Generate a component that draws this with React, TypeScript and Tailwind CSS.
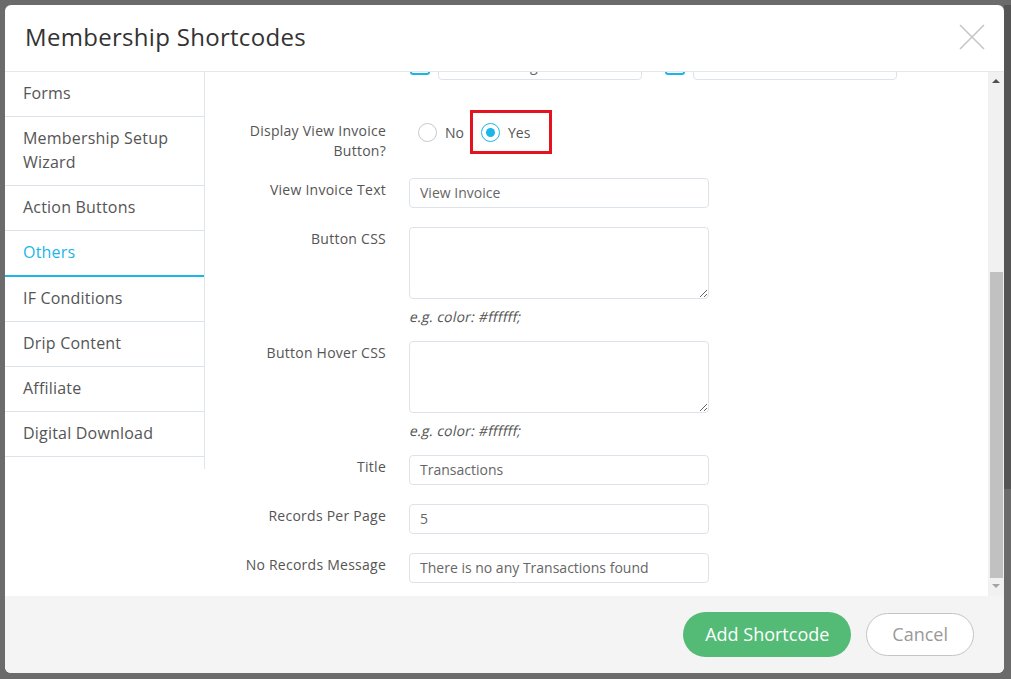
const menu = [
  "Forms",
  "Membership Setup Wizard",
  "Action Buttons",
  "Others",
  "IF Conditions",
  "Drip Content",
  "Affiliate",
  "Digital Download",
];

function Label({ children }: { children: React.ReactNode }) {
  return (
    <div className="w-[181px] shrink-0 pt-[2px] text-right text-[14px] leading-5 tracking-[0.25px] text-[#555]">
      {children}
    </div>
  );
}

function TextInput({ value }: { value: string }) {
  return (
    <div className="flex h-[30px] w-[300px] items-center rounded-[4px] border border-[#dde3ea] bg-white pb-[2px] pl-[10px] text-[14px] text-[#666]">
      {value}
    </div>
  );
}

function CssArea() {
  return (
    <div className="flex flex-col">
      <textarea className="h-[72px] w-[300px] rounded-[4px] border border-[#dde3ea] bg-white outline-none" />
      <p className="mt-2 text-[14px] leading-5 tracking-[0.2px] text-[#555]">
        <span className="inline-block -skew-x-12 pl-[1px]">e.g. color: #ffffff;</span>
      </p>
    </div>
  );
}

function Radio({ checked }: { checked?: boolean }) {
  return (
    <span
      className={
        checked
          ? "flex h-[19px] w-[19px] items-center justify-center rounded-full border border-[#1ab6e8] bg-white"
          : "flex h-[19px] w-[19px] items-center justify-center rounded-full border border-[#c9c9c9] bg-white"
      }
    >
      {checked && <span className="h-[9px] w-[9px] rounded-full bg-[#1ab6e8]" />}
    </span>
  );
}

export default function App() {
  return (
    <div
      className="flex h-[679px] w-[1011px] bg-[#6b6b6b] pl-[5px] pt-[5px]"
      style={{ fontFamily: '"Open Sans", "Noto Sans", sans-serif' }}
    >
      <div className="flex h-[668px] w-[999px] flex-col overflow-hidden rounded-[6px] bg-white">
        {/* header */}
        <div className="flex h-[67px] shrink-0 items-center justify-between border-b border-[#e5e7eb] pb-[2px] pl-[20px] pr-[19px]">
          <h1 className="text-[24px] leading-8 tracking-[0.3px] text-[#333]">Membership Shortcodes</h1>
          <svg width="26" height="26" viewBox="0 0 26 26" fill="none" stroke="#c6c6c6" strokeWidth="1.6">
            <path d="M1 1 L25 25 M25 1 L1 25" />
          </svg>
        </div>

        {/* body */}
        <div className="flex h-[524px] shrink-0">
          <div className="self-start w-[200px] shrink-0 border-r border-[#e1e5eb] pb-3">
            {menu.map((item) =>
              item === "Others" ? (
                <div
                  key={item}
                  className="border-b-2 border-[#1ab6e8] pb-[11px] pl-[18px] pt-[9px] text-[16px] leading-6 tracking-[0.2px] text-[#1ab6e8]"
                >
                  {item}
                </div>
              ) : (
                <div
                  key={item}
                  className="border-b border-[#dde3eb] pb-[11px] pl-[18px] pr-4 pt-[9px] text-[16px] leading-6 tracking-[0.2px] text-[#555]"
                >
                  {item}
                </div>
              )
            )}
          </div>

          <div className="flex-1 overflow-hidden">
            <div className="-mt-[22px] flex flex-col">
              {/* partially scrolled row */}
              <div className="flex h-[30px] items-end pl-[205px]">
                <span className="mb-[5px] h-[20px] w-[20px] rounded-[3px] border-2 border-[#1ab6e8]" />
                <div className="ml-[8px] flex h-[30px] w-[204px] items-center rounded-[4px] border border-[#dde3ea] pl-[10px] text-[14px] text-[#666]">
                  Date Heading
                </div>
                <span className="mb-[5px] ml-[23px] h-[20px] w-[20px] rounded-[3px] border-2 border-[#1ab6e8]" />
                <div className="ml-[8px] h-[30px] w-[204px] rounded-[4px] border border-[#dde3ea]" />
              </div>

              <div className="mt-[39px] flex gap-[23px]">
                <Label>
                  Display View Invoice
                  <br />
                  Button?
                </Label>
                <div className="flex h-[26px] items-center text-[14px] text-[#555]">
                  <span className="ml-[9px] flex items-center gap-[8px]">
                    <Radio />
                    No
                  </span>
                  <span className="ml-[6px] -my-[10px] flex h-[44px] items-center gap-[8px] border-[3px] border-[#e3141f] pl-[8px] pr-[19px]">
                    <Radio checked />
                    Yes
                  </span>
                </div>
              </div>

              <div className="mt-[17px] flex gap-[23px]">
                <Label>View Invoice Text</Label>
                <TextInput value="View Invoice" />
              </div>

              <div className="mt-[19px] flex gap-[23px]">
                <Label>Button CSS</Label>
                <CssArea />
              </div>

              <div className="mt-[14px] flex gap-[23px]">
                <Label>Button Hover CSS</Label>
                <CssArea />
              </div>

              <div className="mt-[14px] flex gap-[23px]">
                <Label>Title</Label>
                <TextInput value="Transactions" />
              </div>

              <div className="mt-[19px] flex gap-[23px]">
                <Label>Records Per Page</Label>
                <TextInput value="5" />
              </div>

              <div className="mt-[19px] flex gap-[23px]">
                <Label>No Records Message</Label>
                <TextInput value="There is no any Transactions found" />
              </div>
            </div>
          </div>

          {/* scrollbar */}
          <div className="flex w-[16px] shrink-0 flex-col items-center bg-[#f1f1f1]">
            <svg width="8" height="16" viewBox="0 0 8 16" className="shrink-0">
              <path d="M0 11 L4 7 L8 11 Z" fill="#505050" />
            </svg>
            <div className="mt-[184px] h-[306px] w-[13px] bg-[#c1c1c1]" />
            <svg width="8" height="16" viewBox="0 0 8 16" className="shrink-0">
              <path d="M0 6 L8 6 L4 10 Z" fill="#a3a3a3" />
            </svg>
          </div>
        </div>

        {/* footer */}
        <div className="flex h-[77px] shrink-0 items-center justify-end gap-[15px] bg-[#f4f4f4] pr-[30px]">
          <button className="h-[45px] rounded-full bg-[#53bb75] px-[22px] text-[18px] text-white">
            Add Shortcode
          </button>
          <button className="h-[43px] rounded-full border border-[#c4c4c4] bg-white px-[25px] text-[18px] text-[#999]">
            Cancel
          </button>
        </div>
      </div>
      <div className="h-[484px] w-[7px] bg-[#555]" />
    </div>
  );
}
